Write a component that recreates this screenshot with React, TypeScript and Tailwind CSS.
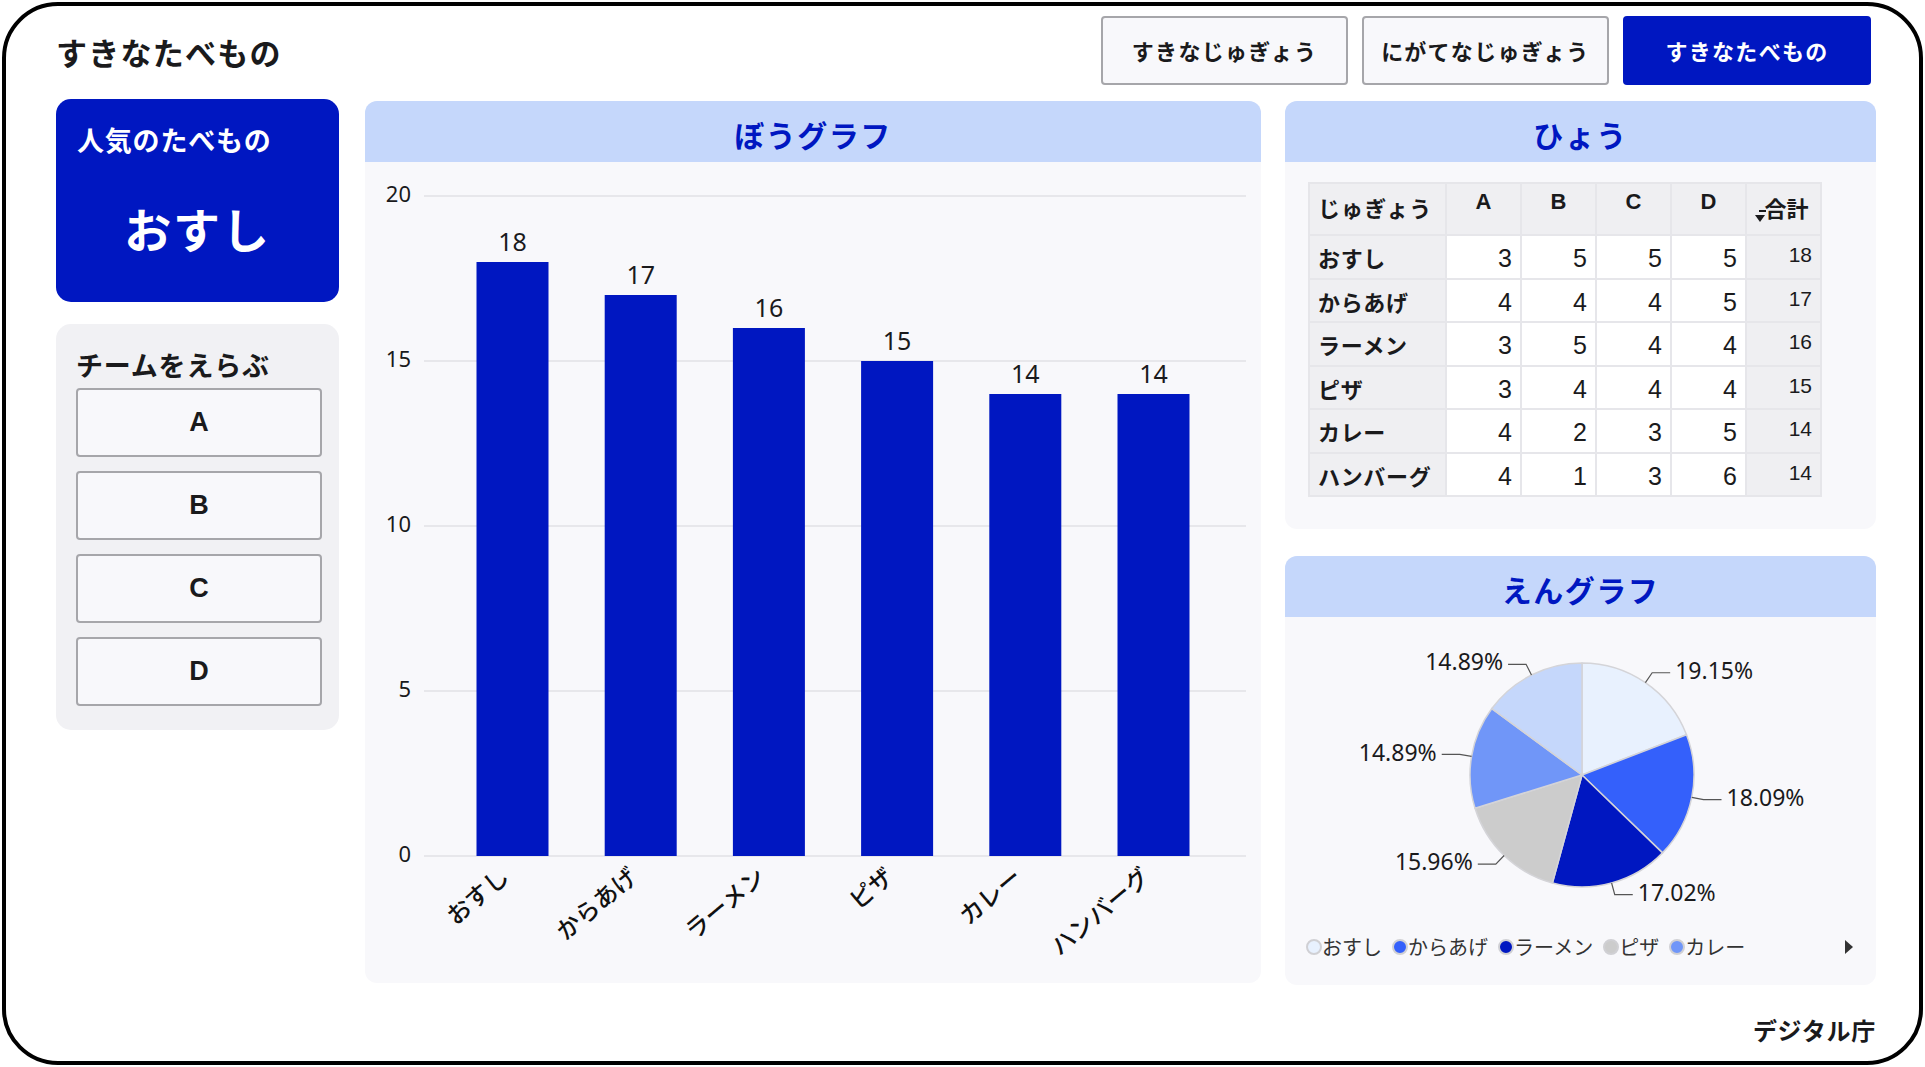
import React from "react";

type Food = { name: string; total: number; color: string; scores: number[] };

const FOODS: Food[] = [
  { name: "おすし", total: 18, color: "#e8f1fe", scores: [3, 5, 5, 5] },
  { name: "からあげ", total: 17, color: "#3460fb", scores: [4, 4, 4, 5] },
  { name: "ラーメン", total: 16, color: "#0017c1", scores: [3, 5, 4, 4] },
  { name: "ピザ", total: 15, color: "#cccccc", scores: [3, 4, 4, 4] },
  { name: "カレー", total: 14, color: "#7096f8", scores: [4, 2, 3, 5] },
  { name: "ハンバーグ", total: 14, color: "#c5d7fb", scores: [4, 1, 3, 6] },
];

const CHART_FONT = "'Noto Sans', 'Noto Sans CJK JP', sans-serif";

function PanelHeader({ title }: { title: string }) {
  return (
    <div className="h-[61px] shrink-0 rounded-t-[12px] bg-[#c5d7fb] flex items-center justify-center pt-[6px] text-[30px] font-bold text-[#0017c1] tracking-[0.05em]">
      {title}
    </div>
  );
}

/** bar chart, drawn in the pixel space of the panel body */
function BarChart() {
  const y0 = 694;
  const unit = 33;
  const cx = (i: number) => 147.5 + i * 128.2;
  return (
    <svg width={896} height={821} style={{ fontFamily: CHART_FONT }}>
      {[0, 5, 10, 15, 20].map((t) => (
        <g key={t}>
          <line x1={59} x2={881} y1={y0 - t * unit} y2={y0 - t * unit} stroke="#e2e2e6" strokeWidth={1.5} />
          <text x={46} y={y0 - t * unit} textAnchor="end" dominantBaseline="middle" fontSize={22} fill="#1a1a1c">
            {t}
          </text>
        </g>
      ))}
      {FOODS.map((f, i) => (
        <g key={f.name}>
          <rect x={cx(i) - 36} y={y0 - f.total * unit} width={72} height={f.total * unit} fill="#0017c1" />
          <text x={cx(i)} y={y0 - f.total * unit - 11} textAnchor="middle" fontSize={25} fill="#1a1a1c">
            {f.total}
          </text>
          <text
            transform={`translate(${cx(i) - 15}, ${y0 + 8}) rotate(-40)`}
            dy="0.85em"
            textAnchor="end"
            fontSize={24}
            fontWeight={500}
            fill="#111"
          >
            {f.name}
          </text>
        </g>
      ))}
    </svg>
  );
}

function PieChart() {
  const c = { x: 297, y: 158 };
  const r = 112;
  const sum = FOODS.reduce((s, f) => s + f.total, 0);
  const pt = (deg: number, rad: number) => {
    const a = (deg * Math.PI) / 180;
    return { x: c.x + rad * Math.sin(a), y: c.y - rad * Math.cos(a) };
  };
  let start = 0;
  const slices = FOODS.map((f) => {
    const sweep = (f.total / sum) * 360;
    const a0 = start;
    const a1 = start + sweep;
    start = a1;
    const p0 = pt(a0, r);
    const p1 = pt(a1, r);
    const large = sweep > 180 ? 1 : 0;
    const d = `M${c.x},${c.y} L${p0.x},${p0.y} A${r},${r} 0 ${large} 1 ${p1.x},${p1.y} Z`;
    const mid = (a0 + a1) / 2;
    const e = pt(mid, r);
    const b = pt(mid, r + 12);
    const right = mid < 180;
    const end = { x: b.x + (right ? 18 : -18), y: b.y };
    const pct = ((f.total / sum) * 100).toFixed(2) + "%";
    return { f, d, e, b, end, right, pct };
  });
  return (
    <svg width={591} height={310} style={{ fontFamily: CHART_FONT }}>
      {slices.map((s) => (
        <path key={s.f.name} d={s.d} fill={s.f.color} stroke="#d4d4d8" strokeWidth={1.5} strokeLinejoin="round" />
      ))}
      {slices.map((s) => (
        <g key={s.f.name + "l"}>
          <polyline
            points={`${s.e.x},${s.e.y} ${s.b.x},${s.b.y} ${s.end.x},${s.end.y}`}
            fill="none"
            stroke="#555"
            strokeWidth={1.2}
          />
          <text
            x={s.end.x + (s.right ? 5 : -5)}
            y={s.end.y}
            textAnchor={s.right ? "start" : "end"}
            dominantBaseline="middle"
            fontSize={23}
            fill="#1a1a1c"
          >
            {s.pct}
          </text>
        </g>
      ))}
    </svg>
  );
}

function SortArrow() {
  return (
    <svg width="16" height="16" viewBox="0 0 16 16" className="absolute left-[7px] top-[24px]">
      <path d="M5 3 H12" stroke="#1a1a1c" strokeWidth="2" />
      <path d="M1 7 L11 7 L6 14 Z" fill="#1a1a1c" />
    </svg>
  );
}

export default function App() {
  return (
    <div className="w-[1925px] h-[1067px] bg-white p-[2px] font-['Noto_Sans_CJK_JP',sans-serif] text-[#1a1a1c]">
      <div className="h-full rounded-[56px] border-4 border-black flex flex-col pl-[50px] pr-[43px] pt-[10px]">
        {/* header */}
        <div className="h-[69px] flex items-center">
          <h1 className="text-[31px] font-bold tracking-[0.04em] pt-[4px]">すきなたべもの</h1>
          <div className="ml-auto flex gap-[14px] pr-[5px]">
            <button className="w-[247px] h-[69px] rounded-[4px] border-2 border-[#a6a6aa] bg-[#f8f8fb] text-[22px] font-bold tracking-[0.06em]">
              すきなじゅぎょう
            </button>
            <button className="w-[247px] h-[69px] rounded-[4px] border-2 border-[#a6a6aa] bg-[#f8f8fb] text-[22px] font-bold tracking-[0.06em]">
              にがてなじゅぎょう
            </button>
            <button className="w-[248px] h-[69px] rounded-[4px] bg-[#0017c1] text-white text-[22px] font-bold tracking-[0.06em]">
              すきなたべもの
            </button>
          </div>
        </div>

        {/* main */}
        <div className="mt-[16px] flex h-[884px]">
          {/* left column */}
          <div className="w-[283px] flex flex-col gap-[22px]">
            <div className="-mt-[2px] h-[203px] rounded-[15px] bg-[#0017c1] text-white px-[21px] pt-[21px]">
              <div className="text-[27px] font-bold tracking-[0.03em]">人気のたべもの</div>
              <div className="mt-[32px] text-center text-[47px] font-bold tracking-[0.04em]">おすし</div>
            </div>
            <div className="h-[406px] rounded-[15px] bg-[#f1f1f4] pl-[20px] pr-[17px] pt-[22px]">
              <div className="text-[27px] font-bold tracking-[0.03em] leading-[38px]">チームをえらぶ</div>
              <div className="mt-[4px] flex flex-col gap-[14px]">
                {["A", "B", "C", "D"].map((t) => (
                  <button
                    key={t}
                    className="h-[69px] rounded-[4px] border-2 border-[#a6a6aa] bg-[#f8f8fb] text-[27px] font-bold font-['Liberation_Sans',sans-serif]"
                  >
                    {t}
                  </button>
                ))}
              </div>
            </div>
          </div>

          {/* bar chart */}
          <div className="ml-[26px] w-[896px] h-[882px] rounded-[12px] bg-[#f8f8fb] flex flex-col">
            <PanelHeader title="ぼうグラフ" />
            <BarChart />
          </div>

          {/* right column */}
          <div className="ml-[24px] w-[591px] flex flex-col gap-[27px]">
            <div className="h-[428px] rounded-[12px] bg-[#f8f8fb] flex flex-col">
              <PanelHeader title="ひょう" />
              <div className="pl-[23px] pt-[20px]">
                <table className="border-collapse font-['Liberation_Sans','Noto_Sans_CJK_JP',sans-serif] text-[#1a1a1c]">
                  <thead>
                    <tr className="h-[52px] bg-[#efeff2]">
                      <th className="w-[137px] border-2 border-[#e6e6ea] pl-[8px] text-left text-[22px] font-bold tracking-[0.05em]">
                        じゅぎょう
                      </th>
                      {["A", "B", "C", "D"].map((h) => (
                        <th key={h} className="w-[75px] border-2 border-[#e6e6ea] align-top pt-[1px] text-[22px] font-bold">
                          {h}
                        </th>
                      ))}
                      <th className="relative w-[75px] border-2 border-[#e6e6ea] text-[22px] font-bold pl-[6px]">
                        <SortArrow />
                        合計
                      </th>
                    </tr>
                  </thead>
                  <tbody>
                    {FOODS.map((f) => (
                      <tr key={f.name} className="h-[43.5px]">
                        <td className="border-2 border-[#e6e6ea] bg-[#efeff2] pl-[8px] pt-[6px] text-[22px] font-bold tracking-[0.03em]">
                          {f.name}
                        </td>
                        {f.scores.map((s, i) => (
                          <td key={i} className="border-2 border-[#e6e6ea] bg-white pr-[8px] pt-[4px] text-right text-[25px]">
                            {s}
                          </td>
                        ))}
                        <td className="border-2 border-[#e6e6ea] bg-[#efeff2] pr-[8px] pb-[4px] text-right text-[21px]">
                          {f.total}
                        </td>
                      </tr>
                    ))}
                  </tbody>
                </table>
              </div>
            </div>

            <div className="h-[429px] rounded-[12px] bg-[#f8f8fb] flex flex-col">
              <PanelHeader title="えんグラフ" />
              <PieChart />
              <div className="h-[40px] flex items-center pl-[21px] pr-[22px] text-[20px] text-[#333]">
                {FOODS.slice(0, 5).map((f) => (
                  <div key={f.name} className="flex items-center mr-[10px]">
                    <span
                      className="inline-block w-[16px] h-[16px] rounded-full border-2 border-[#d0d0d4]"
                      style={{ background: f.color }}
                    />
                    <span>{f.name}</span>
                  </div>
                ))}
                <svg width="10" height="16" viewBox="0 0 10 16" className="ml-auto">
                  <path d="M1 1 L9 8 L1 15 Z" fill="#333" />
                </svg>
              </div>
            </div>
          </div>
        </div>

        {/* footer */}
        <div className="flex-1 flex items-center justify-end pt-[14px]">
          <span className="text-[24px] font-bold tracking-[0.03em]">デジタル庁</span>
        </div>
      </div>
    </div>
  );
}
